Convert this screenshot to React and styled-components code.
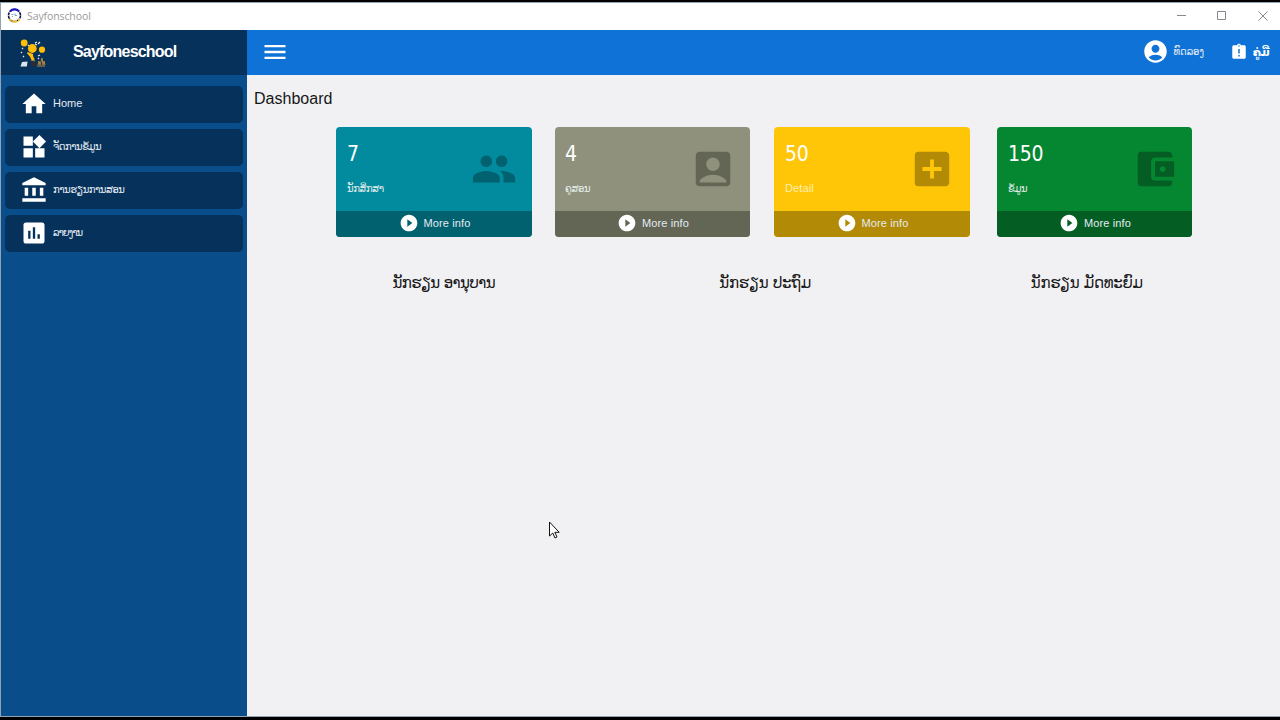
import React from 'react';
import styled, { createGlobalStyle } from 'styled-components';
import {
  MdHome, MdWidgets, MdAccountBalance, MdAssessment, MdPeople, MdAccountBox, MdAddBox,
  MdAccountBalanceWallet, MdPlayCircleFilled, MdAccountCircle, MdAssignmentLate, MdMenu,
} from 'react-icons/md';

const Global = createGlobalStyle`
  * { box-sizing: border-box; }
  body { margin: 0; background: #000; overflow: hidden; font-family: "Liberation Sans", "DejaVu Sans", sans-serif; }
  svg { display: block; flex: none; }
`;

const Window = styled.div`
  height: 720px;
  width: 1280px;
  border-top: 2px solid #000;
  border-bottom: 3px solid #000;
  display: flex;
  flex-direction: column;
  position: relative;
`;
const Frame = styled.div`
  flex: 1;
  min-height: 0;
  display: flex;
  flex-direction: column;
  border: solid #8fa3b5;
  border-width: 1px 0 1px 1px;
`;
const TitleBar = styled.div`
  height: 27px;
  flex: none;
  background: #fff;
  display: flex;
  align-items: center;
  padding: 0 12px 2px 6px;
`;
const WindowTitle = styled.span`
  margin: 1px 0 0 5px;
  flex: 1;
  font: 10.5px/14px "Open Sans", sans-serif;
  letter-spacing: -0.1px;
  color: #9a9a9a;
`;
const Controls = styled.div`
  display: flex;
  gap: 31px;
`;
const Body = styled.div`
  flex: 1;
  min-height: 0;
  display: flex;
`;
const Sidebar = styled.aside`
  width: 246px;
  flex: none;
  background: #094d8b;
`;
const Brand = styled.div`
  height: 45px;
  background: #06315b;
  display: flex;
  align-items: center;
  padding-left: 18px;
`;
const BrandName = styled.span`
  margin: -2px 0 0 25px;
  font: bold 16px/20px "Liberation Sans", sans-serif;
  letter-spacing: -0.8px;
  color: #fff;
  white-space: nowrap;
`;
const Menu = styled.nav`
  padding: 11px 4px;
  display: flex;
  flex-direction: column;
  gap: 6px;
`;
const MenuItem = styled.a`
  height: 37px;
  border-radius: 5px;
  background: #06315b;
  display: flex;
  align-items: center;
  padding: 0 0 2px 15px;
  gap: 5px;
  color: #fff;
`;
const Label = styled.span`
  font-family: "Liberation Sans", "DejaVu Sans", sans-serif;
  font-size: ${(p) => p.$size}px;
  font-weight: ${(p) => (p.$bold ? 700 : 400)};
  line-height: 16px;
  letter-spacing: ${(p) => p.$track || 0}px;
  color: ${(p) => p.$color || '#e4ebf2'};
  white-space: nowrap;
  margin-top: ${(p) => p.$top || 0}px;
`;
const Main = styled.main`
  flex: 1;
  min-width: 0;
  background: #f1f1f4;
`;
const Header = styled.header`
  height: 45px;
  background: #0e72d6;
  color: #fff;
  display: flex;
  align-items: center;
  padding: 0 11px 2px 14px;
`;
const HeaderEntry = styled.div`
  display: flex;
  align-items: center;
  justify-content: space-between;
  width: ${(p) => p.$width}px;
  margin-left: ${(p) => p.$left};
`;
const PageTitle = styled.h1`
  margin: 13px 0 0 7px;
  font: 400 16px/21px "Liberation Sans", sans-serif;
  letter-spacing: 0.02px;
  color: #171717;
`;
const Cards = styled.section`
  display: grid;
  grid-template-columns: 196px 195px 196px 195px;
  column-gap: 23px;
  margin: 18px 0 0 89px;
`;
const Card = styled.article`
  height: 110px;
  width: 100%;
  border-radius: 4px;
  overflow: hidden;
  background: ${(p) => p.$bg};
  margin-left: ${(p) => p.$shift || 0}px;
`;
const CardBody = styled.div`
  height: 84px;
  display: flex;
  justify-content: space-between;
  padding: 14px ${(p) => p.$right}px 0 ${(p) => p.$left || 11}px;
  color: ${(p) => p.$tone};
`;
const CardText = styled.div`
  display: flex;
  flex-direction: column;
  gap: 13px;
`;
const Count = styled.span`
  font: 21px/27px "DejaVu Sans Condensed", "DejaVu Sans", sans-serif;
  font-stretch: condensed;
  letter-spacing: -0.3px;
  color: #fff;
`;
const CardIcon = styled.div`
  padding-top: 5px;
`;
const More = styled.div`
  height: 26px;
  background: ${(p) => p.$bg};
  display: flex;
  align-items: center;
  justify-content: center;
  gap: 5px;
  padding: 0 0 2px 1px;
  color: #fff;
`;
const Levels = styled.section`
  display: grid;
  grid-template-columns: repeat(3, 321.5px);
  margin: 34px 0 0 36px;
`;
const Level = styled.h2`
  margin: 0;
  text-align: center;
  font: 400 15px/24px "DejaVu Sans", sans-serif;
  letter-spacing: ${(p) => p.$track}px;
  color: #171717;
  white-space: nowrap;
`;
const Cursor = styled.svg`
  position: absolute;
  left: 548px;
  top: 519px;
`;

const AppIcon = () => (
  <svg width="15" height="15" viewBox="0 0 15 15">
    <circle cx="7.5" cy="7.5" r="6" fill="#fff" stroke="#15184e" strokeWidth="1.6" strokeDasharray="3 .7" />
    <path d="M3 3.4A6 6 0 0 1 12 3.4" fill="none" stroke="#1515c8" strokeWidth="2" />
    <path d="M2.4 11A6 6 0 0 0 12.6 11" fill="none" stroke="#f0c540" strokeWidth="2" />
    <path d="M4.5 6.5h2M8 5.5v2h2M5 8.5h1" stroke="#7aa3c4" fill="none" />
    <path d="M4 12.5l1 1m5-.5l1-1" stroke="#15184e" />
  </svg>
);

const Logo = () => (
  <svg width="29" height="30" viewBox="0 0 29 30">
    <g fill="#ffbd08">
      <circle cx="5.2" cy="5" r="3.4" />
      <circle cx="13.3" cy="10.5" r="4.4" />
      <circle cx="23" cy="11.7" r="3.1" />
      <path d="M8.5 14l5.5 2 .2 2.5 1.6 3-3 1.2-1.8-4-3-3.5z" />
    </g>
    <path d="M16 5l2-1m1 2l2-2m-5 2l2 1M2 14l1 1m1 3l1 1m4-11l1-1m9 11l2-1m-2 3l1 1M3 10l1 1" stroke="#e5edf5" strokeWidth="1.2" />
    <path d="M3 24l5.5-.5-.6 5H1.5z" fill="#dce5eb" />
    <path d="M11.5 24h5v4h-4z" fill="#352b2b" />
    <path d="M12 22l4 1m3 4l1-4 1 4 2-7 1 7 1-4 1 4m-8 1h8" stroke="#b98a3b" fill="none" />
  </svg>
);

const menu = [
  { Icon: MdHome, text: 'Home', size: 11, track: 0, top: -1 },
  { Icon: MdWidgets, text: 'ຈັດການຂໍ້ມູນ', size: 10, track: -0.5, top: 1 },
  { Icon: MdAccountBalance, text: 'ການຮຽນການສອນ', size: 10, track: -0.5, top: 1 },
  { Icon: MdAssessment, text: 'ລາຍງານ', size: 10, track: -1.1, top: 1 },
];

const cards = [
  { n: '7', text: 'ນັກສຶກສາ', bg: '#028b9e', dark: '#02616e', Icon: MdPeople, right: 15 },
  { n: '4', text: 'ຄູສອນ', bg: '#8f917c', dark: '#636555', Icon: MdAccountBox, right: 14, left: 10 },
  { n: '50', text: 'Detail', bg: '#ffc608', dark: '#b38a05', Icon: MdAddBox, right: 15, shift: 1, latin: true },
  { n: '150', text: 'ຂໍ້ມູນ', bg: '#058732', dark: '#045e23', Icon: MdAccountBalanceWallet, right: 14, shift: 5 },
];

const levels = [
  { text: 'ນັກຮຽນ ອານຸບານ', track: -0.6 },
  { text: 'ນັກຮຽນ ປະຖົມ', track: -0.2 },
  { text: 'ນັກຮຽນ ມັດທະຍົມ', track: -0.3 },
];

export default function App() {
  return (
    <>
      <Global />
      <Window>
        <Frame>
          <TitleBar>
            <AppIcon />
            <WindowTitle>Sayfonschool</WindowTitle>
            <Controls>
              <svg width="10" height="10"><path d="M1 4.5h9" stroke="#858990" /></svg>
              <svg width="10" height="10"><path d="M.5.5h8v8h-8z" fill="none" stroke="#858990" /></svg>
              <svg width="10" height="10"><path d="M.5.5l9 9m0-9l-9 9" stroke="#858990" /></svg>
            </Controls>
          </TitleBar>
          <Body>
            <Sidebar>
              <Brand>
                <Logo />
                <BrandName>Sayfoneschool</BrandName>
              </Brand>
              <Menu>
                {menu.map(({ Icon, text, size, track, top }) => (
                  <MenuItem key={text}>
                    <Icon size={28} />
                    <Label $size={size} $track={track} $top={top}>{text}</Label>
                  </MenuItem>
                ))}
              </Menu>
            </Sidebar>
            <Main>
              <Header>
                <MdMenu size={28} />
                <HeaderEntry $width={62} $left="auto">
                  <MdAccountCircle size={27} />
                  <Label $size={10} $track={-0.1}>ທົດລອງ</Label>
                </HeaderEntry>
                <HeaderEntry $width={39} $left="26px">
                  <MdAssignmentLate size={18} />
                  <Label $size={11} $bold $track={-0.6} $color="#fff">ຄູ່ມື</Label>
                </HeaderEntry>
              </Header>
              <PageTitle>Dashboard</PageTitle>
              <Cards>
                {cards.map(({ n, text, bg, dark, Icon, right, left, shift, latin }) => (
                  <Card key={n} $bg={bg} $shift={shift}>
                    <CardBody $tone={dark} $right={right} $left={left}>
                      <CardText>
                        <Count>{n}</Count>
                        <Label $size={latin ? 11 : 10} $track={latin ? 0.1 : -0.45} $top={latin ? -1 : 0} $color={latin ? '#fff0b0' : '#e2eceb'}>{text}</Label>
                      </CardText>
                      <CardIcon><Icon size={46} /></CardIcon>
                    </CardBody>
                    <More $bg={dark}>
                      <MdPlayCircleFilled size={20} />
                      <Label $size={11} $track={0.1} $top={-1}>More info</Label>
                    </More>
                  </Card>
                ))}
              </Cards>
              <Levels>
                {levels.map(({ text, track }) => <Level key={text} $track={track}>{text}</Level>)}
              </Levels>
            </Main>
          </Body>
        </Frame>
        <Cursor width="14" height="20" viewBox="0 0 14 20">
          <path d="M1.5 1v14l3.3-3 2.2 5 2-1-2.2-4.7h4.4z" fill="#fff" stroke="#111" />
        </Cursor>
      </Window>
    </>
  );
}
